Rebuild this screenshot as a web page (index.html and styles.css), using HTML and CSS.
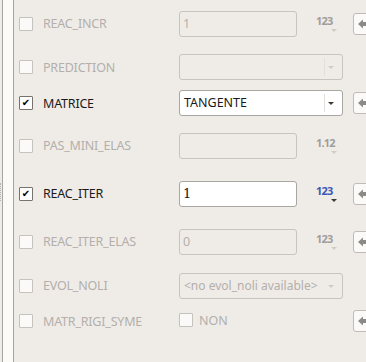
FILE: index.html
```html
<!DOCTYPE html>
<html lang="en">

<head>
    <meta charset="UTF-8">
    <meta name="viewport" content="width=device-width, initial-scale=1.0">
    <title>Keywords</title>
    <link rel="stylesheet" href="styles.css">
</head>

<body>
    <div class="strip">
        <span class="grip"></span>
    </div>
    <div class="panel">
        <div class="row">
            <span class="check"></span>
            <span class="label off">REAC_INCR</span>
            <span class="field off">1</span>
            <span class="spin off">123<i></i></span>
            <span class="back"><svg width="12" height="10" viewBox="0 0 12 10"><path d="M0 5 L5 0.5 V3 H11 V7 H5 V9.5 Z" fill="#8c8a87"/></svg></span>
        </div>
        <div class="row">
            <span class="check"></span>
            <span class="label off">PREDICTION</span>
            <span class="combo off"><b></b><i></i></span>
        </div>
        <div class="row">
            <span class="check on">&#10004;</span>
            <span class="label">MATRICE</span>
            <span class="combo">TANGENTE<b></b><i></i></span>
            <span class="back"><svg width="12" height="10" viewBox="0 0 12 10"><path d="M0 5 L5 0.5 V3 H11 V7 H5 V9.5 Z" fill="#8c8a87"/></svg></span>
        </div>
        <div class="row">
            <span class="check"></span>
            <span class="label off">PAS_MINI_ELAS</span>
            <span class="field off"></span>
            <span class="spin off">1.12<i></i></span>
        </div>
        <div class="row">
            <span class="check on">&#10004;</span>
            <span class="label">REAC_ITER</span>
            <span class="field">1</span>
            <span class="spin">123<i></i></span>
            <span class="back"><svg width="12" height="10" viewBox="0 0 12 10"><path d="M0 5 L5 0.5 V3 H11 V7 H5 V9.5 Z" fill="#8c8a87"/></svg></span>
        </div>
        <div class="row">
            <span class="check"></span>
            <span class="label off">REAC_ITER_ELAS</span>
            <span class="field off">0</span>
            <span class="spin off">123<i></i></span>
            <span class="back"><svg width="12" height="10" viewBox="0 0 12 10"><path d="M0 5 L5 0.5 V3 H11 V7 H5 V9.5 Z" fill="#8c8a87"/></svg></span>
        </div>
        <div class="row">
            <span class="check"></span>
            <span class="label off">EVOL_NOLI</span>
            <span class="combo off flat">&lt;no evol_noli available&gt;<i></i></span>
        </div>
        <div class="row">
            <span class="check"></span>
            <span class="label off">MATR_RIGI_SYME</span>
            <span class="bool"><span class="check"></span>NON</span>
            <span class="back"><svg width="12" height="10" viewBox="0 0 12 10"><path d="M0 5 L5 0.5 V3 H11 V7 H5 V9.5 Z" fill="#8c8a87"/></svg></span>
        </div>
    </div>
</body>

</html>
```

FILE: styles.css
```css
body {
    margin: 0;
    width: 366px;
    height: 362px;
    overflow: hidden;
    display: flex;
    background: #efece8;
    font-family: 'Noto Sans', sans-serif;
    font-size: 12.5px;
    color: #1a1a1a;
}

.strip {
    flex-shrink: 0;
    width: 10px;
    margin-left: 2px;
    border-left: 1px solid #a9a5a1;
    border-right: 1px solid #a9a5a1;
    background: #fcfaf7;
    position: relative;
}

.grip {
    position: absolute;
    left: -3px;
    top: 183px;
    width: 2px;
    height: 18px;
    border-left: 1px dotted #b5b2ae;
}

.panel {
    flex: 1;
    min-width: 0;
    display: grid;
    grid-template-columns: 14px 146px 118px 56px 13px;
    grid-template-rows: 47px 40px 32px 53px 43px 53px 35px 36px;
    padding-left: 5px;
    align-items: center;
}

.row {
    display: contents;
}

.check {
    grid-column: 1;
    width: 12px;
    height: 12px;
    border: 1px solid #c6c2be;
    background: #fbfaf8;
    border-radius: 1px;
    font-family: 'DejaVu Sans', sans-serif;
    font-size: 10px;
    font-weight: bold;
    line-height: 12px;
    text-align: center;
    color: #000;
}

.check.on {
    border-color: #77736f;
    background: #fff;
}

.label {
    grid-column: 2;
    padding-left: 10px;
    letter-spacing: -0.2px;
}

.off {
    color: #b3afab;
}

.field {
    grid-column: 3;
    box-sizing: border-box;
    height: 26px;
    border: 1px solid #aaa6a2;
    border-radius: 3px;
    background: #fff;
    padding-left: 3px;
    line-height: 24px;
    font-family: 'DejaVu Serif', serif;
    font-size: 13px;
}

.field.off {
    background: transparent;
    border-color: #c8c4c0;
    font-family: 'Noto Sans', sans-serif;
    font-size: 12.5px;
}

.combo {
    grid-column: 3 / span 2;
    width: 164px;
    box-sizing: border-box;
    height: 26px;
    border: 1px solid #aaa6a2;
    border-radius: 3px;
    background: #fff;
    padding-left: 4px;
    line-height: 24px;
    position: relative;
}

.combo.off {
    background: transparent;
    border-color: #c8c4c0;
}

.combo b {
    position: absolute;
    right: 17px;
    top: 3px;
    bottom: 3px;
    border-left: 1px solid #e2dfdc;
}

.combo i,
.spin i {
    position: absolute;
    width: 0;
    height: 0;
    border-left: 3px solid transparent;
    border-right: 3px solid transparent;
    border-top: 3px solid #3c3a38;
}

.combo i {
    right: 8px;
    top: 11px;
}

.combo.off i {
    border-top-color: #cfcbc7;
}

.combo.flat {
    font-size: 12px;
}

.spin {
    grid-column: 4;
    position: relative;
    padding-left: 19px;
    font-size: 11px;
    font-weight: bold;
    letter-spacing: -0.8px;
    color: #3f58b5;
    line-height: 12px;
    margin-top: -5px;
}

.spin.off {
    color: #a19e9a;
}

.spin i {
    left: 34px;
    top: 14px;
}

.spin.off i {
    border-top-color: #cfcbc7;
}

.bool {
    grid-column: 3;
    display: flex;
    align-items: center;
    gap: 6px;
    color: #b3afab;
    margin-top: -2px;
}

.back {
    grid-column: 5;
    box-sizing: border-box;
    width: 24px;
    height: 22px;
    border: 1px solid #bfbbb7;
    border-radius: 3px;
    background: #fbfaf8;
    padding: 5px 0 0 4px;
}

.back svg {
    display: block;
}
```
